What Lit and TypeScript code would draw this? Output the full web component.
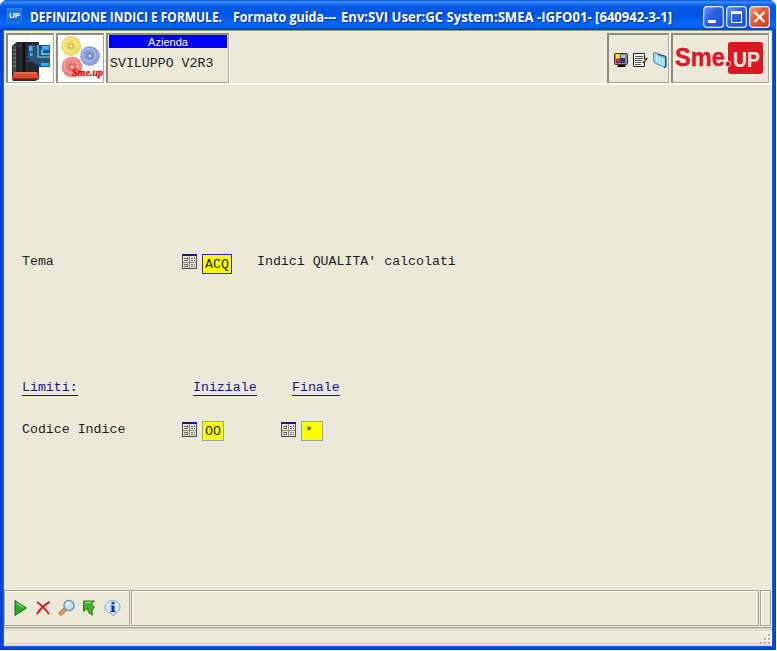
import { LitElement, html, css, svg } from "lit";
import { customElement, property } from "lit/decorators.js";

@customElement("fit-text")
class FitText extends LitElement {
  @property() text = "";
  @property({ type: Number }) width = 100;
  @property({ type: Number }) size = 12;
  static styles = css`
    :host { display: block; flex: none; }
    svg { display: block; overflow: visible; }
    text { fill: currentColor; white-space: pre; }
  `;
  render() {
    return html`<svg width=${this.width} height="20">
      <text x="0" y="14" transform="scale(1 1.077)" font-size=${this.size} textLength=${this.width} lengthAdjust="spacingAndGlyphs">${this.text}</text>
    </svg>`;
  }
}

@customElement("lookup-icon")
class LookupIcon extends LitElement {
  static styles = css`:host { display: block; width: 15px; height: 15px; } svg { display: block; }`;
  render() {
    return html`<svg width="15" height="15" shape-rendering="crispEdges">
      <rect width="15" height="15" fill="#4c4c4c" />
      <rect x="1" y="2" width="13" height="12" fill="#e9e7dd" />
      <rect width="15" height="2" fill="#1a1a78" />
      <path d="M7 2h1v12h-1zM1 8h13v1H1z" fill="#8d8b84" />
      <path d="M2 4h3v1H2zM2 6h3v1H2zM5 3h1v4H5zM9 4h2v1H9zM12 3h1v2h-1zM9 6h2v1H9zM12 6h1v1h-1zM2 10h3v1H2zM2 12h3v1H2zM5 10h1v3H5zM9 10h2v1H9zM12 10h1v1h-1zM9 12h2v1H9zM12 12h1v1h-1z" fill="#6a6a6a" />
    </svg>`;
  }
}

const gear = (cx: number, cy: number, r: number, color: string, dark: string) => svg`
  <circle cx=${cx} cy=${cy} r=${r} fill=${color} />
  <circle cx=${cx} cy=${cy} r=${r} fill="none" stroke=${dark} stroke-opacity=".7" stroke-width="1.2" stroke-dasharray="1.3 1.3" />
  <circle cx=${cx - 1} cy=${cy - 1} r=${r * 0.68} fill="none" stroke="#ffffff" stroke-opacity=".4" />
  <circle cx=${cx} cy=${cy} r=${r * 0.4} fill=${dark} fill-opacity=".55" />
  <circle cx=${cx} cy=${cy} r="1.8" fill="#f4efe0" stroke=${dark} stroke-width=".8" />`;

@customElement("app-root")
class AppRoot extends LitElement {
  static styles = css`
    :host { display: block; width: 777px; height: 651px; background: #fff; overflow: hidden; }
    * { box-sizing: border-box; }
    svg { display: block; flex: none; }
    .window {
      width: 776px; height: 650px; display: flex; flex-direction: column; background: #0a3fd8;
      border-radius: 7px 7px 0 0; overflow: hidden;
    }
    .title {
      height: 30px; flex: none; display: flex; align-items: center; padding: 0 6px 0 7px; color: #fff;
      background: linear-gradient(#0b50d0 0, #3a8ffa 2px, #1a6cf0 4px, #0458e2 7px, #0055e0 14px, #0562f8 21px, #0567ff 25px, #0258e8 28px, #0038b8 30px);
      font-family: "Open Sans", sans-serif; font-weight: 700; text-shadow: 1px 1px 1px #0a2b8c;
    }
    .up {
      width: 15px; height: 15px; background: linear-gradient(#1a7ddc, #1766c8); border: 1px solid #2384e4;
      font: 700 8px/13px "Liberation Sans", sans-serif; text-align: center; text-shadow: none; margin: 1px 8px 0 0;
    }
    fit-text { margin-top: 3px; }
    .t1 { margin-right: 11px; }
    .t2 { margin-right: 5px; }
    .buttons { display: flex; gap: 2px; margin: 3px 0 0 auto; }
    .client {
      flex: 1; margin: 0 4px 4px; background: #ece9d8; display: flex; flex-direction: column; min-height: 0;
      box-shadow: -1px 0 #1565f0, 1px 0 #1565f0, 0 1px #1565f0;
    }
    .tools {
      height: 55px; flex: none; display: flex; padding: 2px 3px 2px 2px; gap: 1px;
      border-top: 1px solid #9c9883; border-bottom: 2px solid #fbfaf4;
    }
    .panel { height: 50px; border: 2px solid #8f8c80; border-right: 1px solid #aaa798; border-bottom: 1px solid #aaa798; box-shadow: 1px 1px #fff; flex: none; margin-right: 1px; }
    .pic { width: 48px; background: #fff; }
    .smeup { font: italic 700 10px "Liberation Serif", serif; fill: #e80000; stroke: #e80000; stroke-width: .3; }
    .company { width: 123px; }
    .head { height: 13px; background: #0000f8; color: #fff; font: 11px/14px "Liberation Sans", sans-serif; text-align: center; margin: 0 1px; }
    .mono { font: 13.25px/16px "Liberation Mono", monospace; color: #1c1c1c; white-space: pre; }
    .company .mono { padding: 8px 0 0 2px; }
    .small { width: 62px; margin-left: auto; display: flex; align-items: center; gap: 4px; padding: 2px 0 0 5px; overflow: hidden; }
    .logo { width: 98px; margin-right: 0; padding: 7px 0 0 3px; }
    .brand { font-family: "Liberation Sans", sans-serif; font-weight: 700; overflow: visible; }
    .form { flex: 1; padding-top: 165px; min-height: 0; }
    .row { display: grid; grid-template-columns: 160px 20px 55px 24px 20px 1fr; padding-left: 18px; height: 24px; align-items: center; }
    .limits { margin-top: 102px; }
    .code { margin-top: 18px; }
    .link { color: #15158c; height: 16px; border-bottom: 1px solid #15158c; justify-self: start; }
    .iniziale { grid-column: 2 / 4; margin-left: 11px; }
    .finale { grid-column: 4 / 7; margin-left: 35px; }
    .field { background: #ffff00; border: 1px solid #8fa6b4; height: 20px; width: 22px; line-height: 20px; padding-left: 2px; justify-self: start; }
    .star { padding-left: 3px; }
    .acq { border-color: #2a2ab0; width: 30px; margin-top: 3px; }
    .code .field { margin-top: 2px; }
    .desc { grid-column: 4 / 7; }
    lookup-icon { margin-top: -1px; }
    .commands { height: 36px; flex: none; display: flex; gap: 1px; padding-right: 1px; }
    .cell { border: 1px solid #aaa798; border-top-color: #a5a295; box-shadow: inset 1px 1px #faf9f2; }
    .icons { width: 126px; display: flex; align-items: center; padding-left: 7px; gap: 5px; }
    .empty { flex: 1; }
    .end { width: 11px; }
    .status {
      height: 19px; flex: none; display: flex; justify-content: flex-end; align-items: flex-end; margin-top: 1px;
      border-top: 1px solid #a9a697; background: linear-gradient(#d2cfbf, #f0eee2 4px, #ece9d8 13px, #d8d4c0);
    }
  `;

  private winButton(kind: string) {
    const close = kind === "close";
    const id = `shade-${kind}`;
    return html`<svg width="21" height="22" viewBox="0 0 21 22">
      <defs>
        <linearGradient id=${id} x1="0" y1="0" x2="1" y2="1">
          <stop offset="0" stop-color=${close ? "#f0a088" : "#6f9cf8"} />
          <stop offset=".4" stop-color=${close ? "#e4603a" : "#2a62e4"} />
          <stop offset="1" stop-color=${close ? "#cc3a14" : "#1a4fd4"} />
        </linearGradient>
      </defs>
      <rect x=".7" y=".7" width="19.6" height="20.6" rx="3" fill=${`url(#${id})`} stroke="#e6edff" stroke-width="1.2" />
      ${kind === "min" ? svg`<path d="M5 14h8v3H5z" fill="#fff" />` : ""}
      ${kind === "max" ? svg`<path d="M5.500 6.500h10v10h-10z" fill="none" stroke="#fff" /><path d="M5 5h11v3H5z" fill="#fff" />` : ""}
      ${close ? svg`<path d="M5.500 6l10 10M15.500 6l-10 10" stroke="#fff" stroke-width="2.2" />` : ""}
    </svg>`;
  }

  private server() {
    return html`<svg width="45" height="47" viewBox="0 0 45 47">
      <path d="M4 11L9 7L31 7L31 43L28 46H5L4 42z" fill="#26282c" />
      <path d="M5 11l3-1v30H5z" fill="#484a4e" />
      <path d="M15 8h2v30h-2z" fill="#0b0c0e" />
      <path d="M5 15h3M5 19h3M5 23h3M5 27h3M5 31h3" stroke="#909398" />
      <path d="M10 11h4M18 22h8M18 26h8" stroke="#5b5d62" />
      <path d="M20 10h22v22H31l-11-9z" fill="#1b55a8" />
      <path d="M21 11h4v5h-4zM34 11h7v4h-7zM22 18h3v3h-3zM33 28h8v3h-8z" fill="#38b4e4" />
      <path d="M30 11h3v2h-3zM37 17h4v2h-4zM28 29h4v2h-4z" fill="#1530a0" />
      <path d="M26 10v16h16" fill="none" stroke="#35524c" stroke-width="2.600" />
      <path d="M30 10v12h12" fill="none" stroke="#79aa8c" stroke-width="1.600" />
      <path d="M34 15v4h8" fill="none" stroke="#70dcec" stroke-width="1.500" />
      <path d="M6 37h23l2 6H4z" fill="#df4934" />
      <path d="M4 43h27v1.500H4z" fill="#a82415" />
      <path d="M6 38h23" stroke="#f08a70" />
    </svg>`;
  }

  private gears() {
    return html`<svg width="45" height="47" viewBox="0 0 45 47">
      ${gear(13, 11, 9.5, "#efe06a", "#cfb83f")}
      ${gear(32, 21, 9.5, "#8ea4e0", "#647dc4")}
      ${gear(14, 32, 10, "#f3827a", "#dc625a")}
      <text class="smeup" x="14" y="41" textLength="31" lengthAdjust="spacingAndGlyphs">Sme.up</text>
    </svg>`;
  }

  render() {
    return html`<div class="window">
      <div class="title">
        <div class="up">UP</div>
        <fit-text class="t1" text="DEFINIZIONE INDICI E FORMULE." width="192" size="13"></fit-text>
        <fit-text class="t2" text="Formato guida---" width="103" size="13"></fit-text>
        <fit-text text="Env:SVI User:GC System:SMEA -IGFO01- [640942-3-1]" width="331" size="13"></fit-text>
        <div class="buttons">${this.winButton("min")}${this.winButton("max")}${this.winButton("close")}</div>
      </div>
      <div class="client">
        <div class="tools">
          <div class="panel pic">${this.server()}</div>
          <div class="panel pic">${this.gears()}</div>
          <div class="panel company"><div class="head">Azienda</div><div class="mono">SVILUPPO V2R3</div></div>
          <div class="panel small">
            <svg width="15" height="16" viewBox="0 0 15 16">
              <rect x=".5" y="1.500" width="13" height="11" rx="1" fill="#8a8a80" stroke="#33332f" />
              <path d="M2 3h9v8H2z" fill="#20368c" /><path d="M2 2h4v5H2z" fill="#f7de26" /><circle cx="4.500" cy="8.500" r="2.200" fill="#e02020" /><path d="M7 3h4v3H7z" fill="#a9c9f0" />
              <path d="M4 13h7l1 2H3z" fill="#111" />
            </svg>
            <svg width="15" height="16" viewBox="0 0 15 16">
              <path d="M.5 1.500h11v13H.5z" fill="#fff" stroke="#222" />
              <path d="M2 4.500h8M2 6.500h8M2 8.500h7M2 10.500h6M2 12.500h6" stroke="#555" />
              <path d="M14 6l-4 5" stroke="#2c2418" stroke-width="2" /><path d="M12.500 7l-2 3" stroke="#d59b43" />
            </svg>
            <svg width="16" height="18" viewBox="0 0 16 18">
              <path d="M1.500 2l3-.5 2 2.500 7 3v9.500L2 11.500z" fill="#9adcf4" stroke="#3989a7" />
              <path d="M4.500 5v7M7.500 6v7M10.500 7.500v7" stroke="#d9f6ff" />
              <path d="M6 3l8 2.500v10l-2 1.500" stroke="#1b2c33" fill="none" />
            </svg>
          </div>
          <div class="panel logo">
            <svg class="brand" width="90" height="34" viewBox="0 0 90 34">
              <text x="-1" y="24" font-size="25.500" fill="#d91b28" stroke="#d91b28" stroke-width=".4" textLength="50" lengthAdjust="spacingAndGlyphs">Sme</text>
              <rect x="52" y="0" width="35" height="32" rx="3" fill="#dc1825" />
              <circle cx="52" cy="22" r="2.800" fill="#dc1825" stroke="#ece9d8" stroke-width=".8" />
              <text x="57" y="25" font-size="22" fill="#f4e9df" textLength="27" lengthAdjust="spacingAndGlyphs">UP</text>
            </svg>
          </div>
        </div>
        <div class="form">
          <div class="row">
            <span class="mono">Tema</span><lookup-icon></lookup-icon><span class="mono field acq">ACQ</span>
            <span class="mono desc">Indici QUALITA' calcolati</span>
          </div>
          <div class="row limits">
            <span class="mono link">Limiti:</span><span class="mono link iniziale">Iniziale</span><span class="mono link finale">Finale</span>
          </div>
          <div class="row code">
            <span class="mono">Codice Indice</span><lookup-icon></lookup-icon><span class="mono field">OO</span>
            <span></span><lookup-icon></lookup-icon><span class="mono field star">*</span>
          </div>
        </div>
        <div class="commands">
          <div class="cell icons">
            <svg width="18" height="18" viewBox="0 0 18 18"><path d="M3 1.500v15L14.500 9z" fill="#28a72b" stroke="#14701a" /><path d="M4.500 4l7 4.500" stroke="#72d364" stroke-width="1.500" /></svg>
            <svg width="18" height="18" viewBox="0 0 18 18"><path d="M2 3C7 6 11 11 14 15M14.500 3C9 6 5 10 2 15" stroke="#d9182b" stroke-width="2" fill="none" /></svg>
            <svg width="18" height="18" viewBox="0 0 18 18"><path d="M7.500 10l-6 5.500" stroke="#8a6040" stroke-width="4" /><path d="M7.500 10l-6 5.500" stroke="#f09a50" stroke-width="2.400" /><circle cx="11" cy="6.500" r="5" fill="#c0e6ff" stroke="#7b90a8" stroke-width="1.500" /><path d="M8.500 6.500a3 3 0 0 1 3-3" stroke="#fff" stroke-width="1.500" fill="none" /></svg>
            <svg width="18" height="18" viewBox="0 0 18 18"><path d="M2.500 2h11L10.500 5l3 3c-2 2-3 4-2 8C8 15 6 12 7 9L5.500 10 2.500 12.500z" fill="#48ad28" stroke="#287a18" /><path d="M4 3.500h6" stroke="#93df68" stroke-width="1.400" /></svg>
            <svg width="18" height="18" viewBox="0 0 18 18"><path d="M8.500 1.500c4 0 7.500 2.500 7.500 6.500 0 3-2 5-4.500 6l-2 3-2.500-3C3.500 13.500 1 11 1 8S4.500 1.500 8.500 1.500z" fill="#d4e8fc" stroke="#8aa5c2" /><path d="M7.500 3h3v2.200h-3zM6.500 6.500h4V12h1v1h-5v-1h1V7.500h-1z" fill="#17339a" /></svg>
          </div>
          <div class="cell empty"></div>
          <div class="cell end"></div>
        </div>
        <div class="status">
          <svg width="13" height="13" viewBox="0 0 13 13" shape-rendering="crispEdges">
            <path d="M10 2h2v2h-2zM6 6h2v2H6zM10 6h2v2h-2zM2 10h2v2H2zM6 10h2v2H6zM10 10h2v2h-2z" fill="#fff" />
            <path d="M9 1h2v2H9zM5 5h2v2H5zM9 5h2v2H9zM1 9h2v2H1zM5 9h2v2H5zM9 9h2v2H9z" fill="#b3af9d" />
          </svg>
        </div>
      </div>
    </div>`;
  }
}
